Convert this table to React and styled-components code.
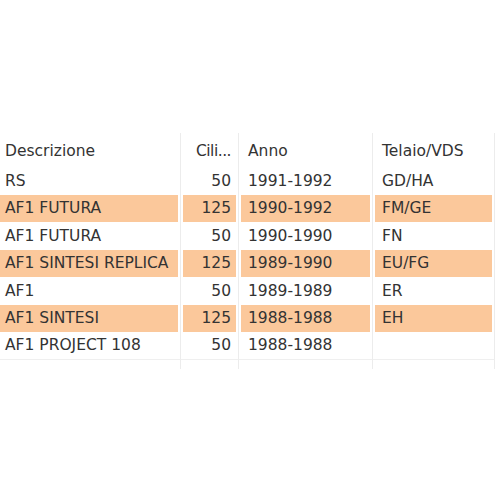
import React from "react";
import styled, { createGlobalStyle } from "styled-components";

const GlobalStyle = createGlobalStyle`
  html, body {
    margin: 0;
    padding: 0;
    background: #ffffff;
  }
  body {
    font-family: "DejaVu Sans", "Liberation Sans", sans-serif;
    color: #333333;
  }
`;

const Page = styled.div`
  width: 500px;
  height: 500px;
  padding-top: 133px;
  box-sizing: border-box;
  overflow: hidden;
`;

const Grid = styled.div`
  display: grid;
  grid-template-columns: 181px 58px 134px 122px;
  width: 495px;
`;

const Cell = styled.div`
  height: ${(p) => (p.$head ? "34px" : "27.5px")};
  border-right: 1px solid #ececec;
  border-bottom: ${(p) => (p.$last ? "1px solid #efefef" : "none")};
  box-sizing: border-box;
  padding: 0 2px 0 ${(p) => (p.$first ? "0" : "2px")};
  display: flex;
`;

const Fill = styled.div`
  flex: 1;
  min-width: 0;
  display: flex;
  align-items: center;
  justify-content: ${(p) => (p.$right ? "flex-end" : "flex-start")};
  background: ${(p) => (p.$hl ? "#fbc89b" : "transparent")};
  padding: ${(p) => (p.$first ? "0 0 0 5px" : p.$right ? "0 5px 0 0" : "0 0 0 7px")};
  padding-top: ${(p) => (p.$head ? "2px" : "0")};
  font-size: 15.5px;
  white-space: nowrap;
`;

const HeadText = styled.span`
  letter-spacing: ${(p) => p.$tight || "0"};
`;

const Tail = styled.div`
  height: 9px;
  border-right: 1px solid #ececec;
  box-sizing: border-box;
`;

const rows = [
  ["RS", "50", "1991-1992", "GD/HA", false],
  ["AF1 FUTURA", "125", "1990-1992", "FM/GE", true],
  ["AF1 FUTURA", "50", "1990-1990", "FN", false],
  ["AF1 SINTESI REPLICA", "125", "1989-1990", "EU/FG", true],
  ["AF1", "50", "1989-1989", "ER", false],
  ["AF1 SINTESI", "125", "1988-1988", "EH", true],
  ["AF1 PROJECT 108", "50", "1988-1988", "", false],
];

export default function App() {
  return (
    <Page>
      <GlobalStyle />
      <Grid>
        <Cell $head $first>
          <Fill $head $first>Descrizione</Fill>
        </Cell>
        <Cell $head>
          <Fill $head $right>
            <HeadText $tight="-0.5px">Cili...</HeadText>
          </Fill>
        </Cell>
        <Cell $head>
          <Fill $head>Anno</Fill>
        </Cell>
        <Cell $head>
          <Fill $head>Telaio/VDS</Fill>
        </Cell>
        {rows.map((r, i) => {
          const last = i === rows.length - 1;
          return (
            <React.Fragment key={i}>
              <Cell $first $last={last}>
                <Fill $first $hl={r[4]}>{r[0]}</Fill>
              </Cell>
              <Cell $last={last}>
                <Fill $right $hl={r[4]}>{r[1]}</Fill>
              </Cell>
              <Cell $last={last}>
                <Fill $hl={r[4]}>{r[2]}</Fill>
              </Cell>
              <Cell $last={last}>
                <Fill $hl={r[4] && r[3]}>{r[3]}</Fill>
              </Cell>
            </React.Fragment>
          );
        })}
        <Tail />
        <Tail />
        <Tail />
        <Tail />
      </Grid>
    </Page>
  );
}
